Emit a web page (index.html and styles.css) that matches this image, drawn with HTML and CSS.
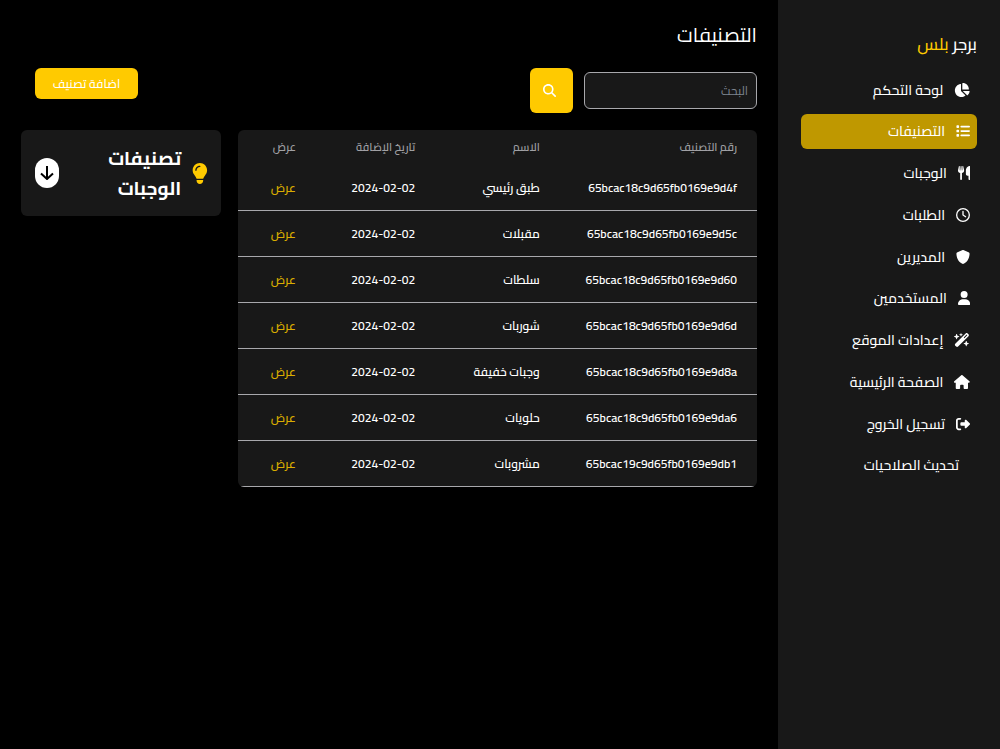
FILE: index.html
```html
<!DOCTYPE html>
<html lang="ar" dir="rtl">
<head>
  <meta charset="UTF-8" />
  <meta name="viewport" content="width=device-width, initial-scale=1.0"/>
  <title>التصنيفات</title>
  <link rel="stylesheet" href="styles.css">
</head>
<body>
  <div class="layout">
    <aside class="sidebar">
      <div class="brand">برجر <span>بلس</span></div>
      <nav class="menu">
        <a href="#" class="menu-link">
          <svg viewBox="0 0 576 512"><path d="M304 240V16.6c0-9 7-16.6 16-16.6C443.7 0 544 100.3 544 224c0 9-7.6 16-16.6 16H304zM32 272C32 150.7 122.1 50.3 239 34.3c9.2-1.3 17 6.1 17 15.4V288L412.5 444.5c6.7 6.7 6.2 17.7-1.5 23.1C371.8 495.6 323.8 512 272 512C139.5 512 32 404.6 32 272zm526.4 16c9.3 0 16.6 7.8 15.4 17c-7.7 55.9-34.6 105.6-73.9 142.3c-6 5.6-15.4 5.2-21.2-.7L320 288H558.4z"/></svg>
          <span>لوحة التحكم</span>
        </a>
        <a href="#" class="menu-link active">
          <svg viewBox="0 0 512 512"><path d="M40 48C26.7 48 16 58.7 16 72v48c0 13.3 10.7 24 24 24H88c13.3 0 24-10.7 24-24V72c0-13.3-10.7-24-24-24H40zM192 64c-17.7 0-32 14.3-32 32s14.3 32 32 32H480c17.7 0 32-14.3 32-32s-14.3-32-32-32H192zm0 160c-17.7 0-32 14.3-32 32s14.3 32 32 32H480c17.7 0 32-14.3 32-32s-14.3-32-32-32H192zm0 160c-17.7 0-32 14.3-32 32s14.3 32 32 32H480c17.7 0 32-14.3 32-32s-14.3-32-32-32H192zM16 232v48c0 13.3 10.7 24 24 24H88c13.3 0 24-10.7 24-24V232c0-13.3-10.7-24-24-24H40c-13.3 0-24 10.7-24 24zM40 368c-13.3 0-24 10.7-24 24v48c0 13.3 10.7 24 24 24H88c13.3 0 24-10.7 24-24V392c0-13.3-10.7-24-24-24H40z"/></svg>
          <span>التصنيفات</span>
        </a>
        <a href="#" class="menu-link">
          <svg viewBox="0 0 448 512"><path d="M416 0C400 0 288 32 288 176V288c0 35.3 28.7 64 64 64h32V480c0 17.7 14.3 32 32 32s32-14.3 32-32V352 240 32c0-17.7-14.3-32-32-32zM64 16C64 7.8 57.9 1 49.7 .1S34.2 4.6 32.4 12.5L2.1 148.8C.7 155.1 0 161.5 0 167.9c0 45.9 35.1 83.6 80 87.7V480c0 17.7 14.3 32 32 32s32-14.3 32-32V255.6c44.9-4.1 80-41.8 80-87.7c0-6.4-.7-12.8-2.1-19.1L191.6 12.5c-1.8-8-9.3-13.3-17.4-12.4S160 7.8 160 16V150.2c0 5.4-4.4 9.8-9.8 9.8c-5.1 0-9.3-3.9-9.8-9L127.9 14.6C127.2 6.3 120.3 0 112 0s-15.2 6.3-15.9 14.6L83.7 151c-.5 5.1-4.7 9-9.8 9c-5.4 0-9.8-4.4-9.8-9.8V16z"/></svg>
          <span>الوجبات</span>
        </a>
        <a href="#" class="menu-link">
          <svg viewBox="0 0 512 512"><path d="M464 256A208 208 0 1 1 48 256a208 208 0 1 1 416 0zM0 256a256 256 0 1 0 512 0A256 256 0 1 0 0 256zM232 120V256c0 8 4 15.5 10.7 20l96 64c11 7.4 25.9 4.4 33.3-6.7s4.4-25.9-6.7-33.3L280 243.2V120c0-13.3-10.7-24-24-24s-24 10.7-24 24z"/></svg>
          <span>الطلبات</span>
        </a>
        <a href="#" class="menu-link">
          <svg viewBox="0 0 512 512"><path d="M256 0c4.6 0 9.2 1 13.4 2.9L457.7 82.8c22 9.3 38.4 31 38.3 57.2c-.5 99.2-41.3 280.7-213.6 363.2c-16.7 8-36.1 8-52.8 0C57.3 420.7 16.5 239.2 16 140c-.1-26.2 16.3-47.9 38.3-57.2L242.7 2.9C246.8 1 251.4 0 256 0z"/></svg>
          <span>المديرين</span>
        </a>
        <a href="#" class="menu-link">
          <svg viewBox="0 0 448 512"><path d="M224 256A128 128 0 1 0 224 0a128 128 0 1 0 0 256zm-45.7 48C79.8 304 0 383.8 0 482.3C0 498.7 13.3 512 29.7 512H418.3c16.4 0 29.7-13.3 29.7-29.7C448 383.8 368.2 304 269.7 304H178.3z"/></svg>
          <span>المستخدمين</span>
        </a>
        <a href="#" class="menu-link">
          <svg viewBox="0 0 576 512"><path d="M234.7 42.7L197 56.8c-3 1.1-5 4-5 7.2s2 6.1 5 7.2l37.7 14.1L248.8 123c1.1 3 4 5 7.2 5s6.1-2 7.2-5l14.1-37.7L315 71.2c3-1.1 5-4 5-7.2s-2-6.1-5-7.2L277.3 42.7 263.2 5c-1.1-3-4-5-7.2-5s-6.1 2-7.2 5L234.7 42.7zM46.1 395.4c-18.7 18.7-18.7 49.1 0 67.9l34.6 34.6c18.7 18.7 49.1 18.7 67.9 0L529.9 116.5c18.7-18.7 18.7-49.1 0-67.9L495.3 14.1c-18.7-18.7-49.1-18.7-67.9 0L46.1 395.4zM484.6 82.6l-105 105-23.3-23.3 105-105 23.3 23.3zM7.5 117.2C3 118.9 0 123.2 0 128s3 9.1 7.5 10.8L64 160l21.2 56.5c1.7 4.5 6 7.5 10.8 7.5s9.1-3 10.8-7.5L128 160l56.5-21.2c4.5-1.7 7.5-6 7.5-10.8s-3-9.1-7.5-10.8L128 96 106.8 39.5C105.1 35 100.8 32 96 32s-9.1 3-10.8 7.5L64 96 7.5 117.2zm352 256c-4.5 1.7-7.5 6-7.5 10.8s3 9.1 7.5 10.8L416 416l21.2 56.5c1.7 4.5 6 7.5 10.8 7.5s9.1-3 10.8-7.5L480 416l56.5-21.2c4.5-1.7 7.5-6 7.5-10.8s-3-9.1-7.5-10.8L480 352l-21.2-56.5c-1.7-4.5-6-7.5-10.8-7.5s-9.1 3-10.8 7.5L416 352l-56.5 21.2z"/></svg>
          <span>إعدادات الموقع</span>
        </a>
        <a href="#" class="menu-link">
          <svg viewBox="0 0 576 512"><path d="M575.8 255.5c0 18-15 32.1-32 32.1h-32l.7 160.2c0 2.7-.2 5.4-.5 8.1V472c0 22.1-17.9 40-40 40H456c-1.1 0-2.2 0-3.3-.1c-1.4 .1-2.8 .1-4.2 .1H416 392c-22.1 0-40-17.9-40-40V448 384c0-17.7-14.3-32-32-32H256c-17.7 0-32 14.3-32 32v64 24c0 22.1-17.9 40-40 40H160 128.1c-1.5 0-3-.1-4.5-.2c-1.2 .1-2.4 .2-3.6 .2H104c-22.1 0-40-17.9-40-40V360c0-.9 0-1.9 .1-2.8V287.6H32c-18 0-32-14-32-32.1c0-9 3-17 10-24L266.4 8c7-7 15-8 22-8s15 2 21 7L564.8 231.5c8 7 12 15 11 24z"/></svg>
          <span>الصفحة الرئيسية</span>
        </a>
        <a href="#" class="menu-link">
          <svg viewBox="0 0 512 512"><path d="M377.9 105.9L500.7 228.7c7.2 7.2 11.3 17.1 11.3 27.3s-4.1 20.1-11.3 27.3L377.9 406.1c-6.4 6.4-15 9.9-24 9.9c-18.7 0-33.9-15.2-33.9-33.9l0-62.1-128 0c-17.7 0-32-14.3-32-32l0-64c0-17.7 14.3-32 32-32l128 0 0-62.1c0-18.7 15.2-33.9 33.9-33.9c9 0 17.6 3.6 24 9.9zM160 96L96 96c-17.7 0-32 14.3-32 32l0 256c0 17.7 14.3 32 32 32l64 0c17.7 0 32 14.3 32 32s-14.3 32-32 32l-64 0c-53 0-96-43-96-96L0 128C0 75 43 32 96 32l64 0c17.7 0 32 14.3 32 32s-14.3 32-32 32z"/></svg>
          <span>تسجيل الخروج</span>
        </a>
        <a href="#" class="menu-link">
          <span>تحديث الصلاحيات</span>
        </a>
      </nav>
    </aside>

    <main class="content">
      <h1>التصنيفات</h1>

      <div class="toolbar">
        <form class="search">
          <input type="text" placeholder="البحث" aria-label="البحث" />
          <button type="button" class="search-btn" aria-label="البحث">
            <svg viewBox="0 0 512 512"><path d="M416 208c0 45.9-14.9 88.3-40 122.7L502.6 457.4c12.5 12.5 12.5 32.8 0 45.3s-32.8 12.5-45.3 0L330.7 376c-34.4 25.2-76.8 40-122.7 40C93.1 416 0 322.9 0 208S93.1 0 208 0S416 93.1 416 208zM208 352a144 144 0 1 0 0-288 144 144 0 1 0 0 288z"/></svg>
          </button>
        </form>
        <button type="button" class="add-btn">اضافة تصنيف</button>
      </div>

      <div class="panels">
        <div class="table-card">
          <table>
            <thead>
              <tr>
                <th class="col-id">رقم التصنيف</th>
                <th class="col-name">الاسم</th>
                <th class="col-date">تاريخ الإضافة</th>
                <th>عرض</th>
              </tr>
            </thead>
            <tbody>
              <tr><td>65bcac18c9d65fb0169e9d4f</td><td>طبق رئيسي</td><td>2024-02-02</td><td><a href="#">عرض</a></td></tr>
              <tr><td>65bcac18c9d65fb0169e9d5c</td><td>مقبلات</td><td>2024-02-02</td><td><a href="#">عرض</a></td></tr>
              <tr><td>65bcac18c9d65fb0169e9d60</td><td>سلطات</td><td>2024-02-02</td><td><a href="#">عرض</a></td></tr>
              <tr><td>65bcac18c9d65fb0169e9d6d</td><td>شوربات</td><td>2024-02-02</td><td><a href="#">عرض</a></td></tr>
              <tr><td>65bcac18c9d65fb0169e9d8a</td><td>وجبات خفيفة</td><td>2024-02-02</td><td><a href="#">عرض</a></td></tr>
              <tr><td>65bcac18c9d65fb0169e9da6</td><td>حلويات</td><td>2024-02-02</td><td><a href="#">عرض</a></td></tr>
              <tr><td>65bcac19c9d65fb0169e9db1</td><td>مشروبات</td><td>2024-02-02</td><td><a href="#">عرض</a></td></tr>
            </tbody>
          </table>
        </div>

        <section class="info-card">
          <svg class="bulb" viewBox="0 0 384 512"><path d="M272 384c9.6-31.9 29.5-59.1 49.2-86.2c5.2-7.1 10.4-14.2 15.4-21.4c19.8-28.5 31.4-63 31.4-100.3C368 78.8 289.2 0 192 0S16 78.8 16 176c0 37.3 11.6 71.9 31.4 100.3c5 7.2 10.2 14.3 15.4 21.4c19.8 27.1 39.7 54.4 49.2 86.2H272zM192 512c44.2 0 80-35.8 80-80V416H112v16c0 44.2 35.8 80 80 80zM112 176c0 8.8-7.2 16-16 16s-16-7.2-16-16c0-61.9 50.1-112 112-112c8.8 0 16 7.2 16 16s-7.2 16-16 16c-44.2 0-80 35.8-80 80z"/></svg>
          <h2>تصنيفات الوجبات</h2>
          <button type="button" class="toggle-btn" aria-label="تصنيفات الوجبات">
            <svg viewBox="0 0 14 14"><path d="M7 0v13M1 7.500 7 13l6-5.500"/></svg>
          </button>
        </section>
      </div>
    </main>
  </div>
</body>
</html>
```
FILE: styles.css
```css
* {
  box-sizing: border-box;
}

body {
  margin: 0;
  background: #000;
  color: #fff;
  font-family: Cairo, 'Open Sans', 'DejaVu Sans Condensed', 'DejaVu Sans', sans-serif;
  font-size: 12px;
}

a {
  color: inherit;
  text-decoration: none;
}

button,
input {
  font-family: inherit;
  font-size: 12px;
}

button {
  border: none;
  cursor: pointer;
  padding: 0;
}

h1,
h2 {
  margin: 0;
}

svg {
  display: block;
  fill: currentColor;
}

.layout {
  display: flex;
  min-height: 100vh;
}

/* Sidebar */
.sidebar {
  flex: 0 0 222px;
  padding: 28px 23px;
  background: #181818;
}

.brand {
  font-size: 17px;
  font-weight: 500;
  line-height: 32px;
  margin-bottom: 12px;
}

.brand span {
  color: #ffca00;
}

.menu {
  display: flex;
  flex-direction: column;
  justify-content: space-between;
  height: 411px;
}

.menu-link {
  display: flex;
  align-items: center;
  height: 35px;
  padding: 0 7px;
  border-radius: 6px;
  font-size: 14px;
  font-weight: 500;
}

.menu-link svg {
  height: 14px;
}

.menu-link span {
  margin-right: 11px;
}

.menu-link.active {
  background: #bf9800;
}

/* Content */
.content {
  flex: 1;
  min-width: 0;
  padding: 19px 21px;
}

h1 {
  font-size: 20px;
  font-weight: 400;
  line-height: 32px;
  margin-bottom: 17px;
}

.toolbar {
  display: flex;
  justify-content: space-between;
  align-items: flex-start;
  margin-bottom: 17px;
}

.search {
  display: flex;
  align-items: center;
  gap: 11px;
}

.search input {
  width: 173px;
  height: 37px;
  padding: 0 8px;
  border: 1px solid #a8a8ac;
  border-radius: 6px;
  background: #181818;
  color: #fff;
}

.search input::placeholder {
  color: #7d8590;
}

.search-btn {
  display: grid;
  place-items: center;
  width: 43px;
  height: 45px;
  padding-right: 4px;
  border-radius: 6px;
  background: #ffca00;
  color: #fff;
}

.search-btn svg {
  height: 13px;
}

.add-btn {
  height: 31px;
  width: 103px;
  margin-left: 14px;
  border-radius: 6px;
  background: #ffca00;
  color: #fff;
  font-weight: 500;
}

.panels {
  display: grid;
  grid-template-columns: 1fr 200px;
  align-items: start;
  gap: 17px;
}

.table-card {
  overflow: hidden;
  border-radius: 6px;
  background: #181818;
}

table {
  width: 100%;
  table-layout: fixed;
  border-collapse: separate;
  border-spacing: 0;
}

th,
td {
  padding: 0 20px 0 0;
  text-align: right;
  white-space: nowrap;
}

th {
  height: 35px;
  padding-bottom: 2px;
  color: #a0a0a4;
  font-size: 11px;
  font-weight: 600;
}

td {
  height: 46px;
  border-bottom: 1px solid #a8a8ac;
  font-weight: 600;
}

td a {
  color: #d9ac00;
}

.col-id {
  width: 38%;
}

.col-name {
  width: 24%;
}

.col-date {
  width: 23%;
}

.info-card {
  display: flex;
  align-items: center;
  gap: 11px;
  padding: 13px 13px 13px 14px;
  border-radius: 6px;
  background: #181818;
}

.bulb {
  height: 21px;
  color: #ffca00;
}

.info-card h2 {
  flex: 1;
  font-size: 19px;
  line-height: 30px;
}

.toggle-btn {
  display: grid;
  place-items: center;
  width: 24px;
  height: 30px;
  border-radius: 12px;
  background: #fff;
  color: #000;
}

.toggle-btn svg {
  width: 14px;
  height: 14px;
  fill: none;
  stroke: currentColor;
  stroke-width: 2;
}
```
